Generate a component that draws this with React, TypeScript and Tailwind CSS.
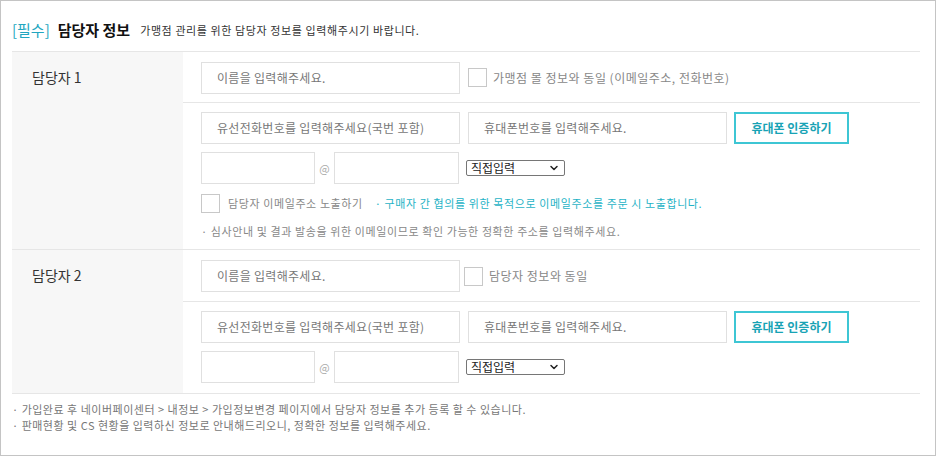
import { ChevronDown } from 'lucide-react'

const FONT = 'font-["Noto_Sans_CJK_KR","Noto_Sans",sans-serif]'

function TextInput({ placeholder = '', w }: { placeholder?: string; w: string }) {
  return (
    <div
      className={`${w} flex h-[32px] shrink-0 items-center border border-[#e0e0e0] bg-white pl-[15px] text-[12px] tracking-[0.3px] text-[#777]`}
    >
      {placeholder}
    </div>
  )
}

function Check() {
  return <span className="block h-[19px] w-[19px] shrink-0 border border-[#c8c8c8] bg-white" />
}

function SelectBox() {
  return (
    <div className="ml-[7px] flex h-[16px] w-[99px] items-center justify-between rounded-[2px] border border-[#767676] bg-white pl-[4px] pr-[4px] text-[12px] leading-none text-[#222]">
      <span>직접입력</span>
      <ChevronDown size={12} strokeWidth={3} className="text-[#222]" />
    </div>
  )
}

function PhoneEmail() {
  return (
    <>
      <div className="flex items-center">
        <TextInput w="w-[259px]" placeholder="유선전화번호를 입력해주세요(국번 포함)" />
        <div className="ml-[8px]">
          <TextInput w="w-[259px]" placeholder="휴대폰번호를 입력해주세요." />
        </div>
        <button
          type="button"
          className="ml-[7px] flex h-[32px] w-[115px] items-center justify-center border-2 border-[#3ec6d4] bg-white text-[12px] font-semibold text-[#18a3b5]"
        >
          휴대폰 인증하기
        </button>
      </div>
      <div className="mt-[8px] flex items-center">
        <TextInput w="w-[114px]" />
        <span className="w-[19px] text-center text-[11px] text-[#aaa]">@</span>
        <TextInput w="w-[125px]" />
        <SelectBox />
      </div>
    </>
  )
}

function Contact({
  label,
  sameLabel,
  checkGap,
  extra,
}: {
  label: string
  sameLabel: string
  checkGap: string
  extra?: boolean
}) {
  return (
    <div className="grid grid-cols-[171px_1fr]">
      <div className="bg-[#f7f7f7]">
        <div className="flex h-[51px] items-center pl-[20px] text-[14px] text-[#333]">{label}</div>
      </div>
      <div>
        <div
          className={`flex ${extra ? 'h-[51px]' : 'h-[52px]'} items-center border-b border-[#e6e6e6] pl-[18px] pt-[1px]`}
        >
          <TextInput w="w-[259px]" placeholder="이름을 입력해주세요." />
          <div className={`${checkGap} flex items-center gap-[6px] text-[12px] tracking-[0.5px] text-[#888]`}>
            <Check />
            <span>{sameLabel}</span>
          </div>
        </div>
        <div className={`pl-[18px] pt-[9px] ${extra ? 'pb-[0px]' : 'pb-[10px]'}`}>
          <PhoneEmail />
          {extra && (
            <>
              <div className="mt-[10px] flex items-center text-[11px] tracking-[0.6px]">
                <Check />
                <span className="ml-[8px] text-[#888]">담당자 이메일주소 노출하기</span>
                <span className="ml-[12px] text-[#1fb3c6]">· 구매자 간 협의를 위한 목적으로 이메일주소를 주문 시 노출합니다.</span>
              </div>
              <div className="flex h-[36px] items-center text-[11px] tracking-[0.6px] text-[#888]">
                · 심사안내 및 결과 발송을 위한 이메일이므로 확인 가능한 정확한 주소를 입력해주세요.
              </div>
            </>
          )}
        </div>
      </div>
    </div>
  )
}

export default function App() {
  return (
    <div className={`${FONT} h-[456px] w-[936px] border border-[#c4c4c4] bg-white pl-[11px] pr-[15px]`}>
      <div className="flex h-[50px] items-center pt-[8px]">
        <span className="text-[15px] text-[#22a6c0]">[필수]</span>
        <span className="ml-[8px] text-[15px] font-bold text-[#111]">담당자 정보</span>
        <span className="ml-[10px] text-[11px] tracking-[0.6px] text-[#333]">
          가맹점 관리를 위한 담당자 정보를 입력해주시기 바랍니다.
        </span>
      </div>
      <div className="border-y border-[#e6e6e6]">
        <div className="border-b border-[#e6e6e6]">
          <Contact
            label="담당자 1"
            sameLabel="가맹점 몰 정보와 동일 (이메일주소, 전화번호)"
            checkGap="ml-[8px]"
            extra
          />
        </div>
        <Contact label="담당자 2" sameLabel="담당자 정보와 동일" checkGap="ml-[4px]" />
      </div>
      <div className="pt-[7px] text-[11px] leading-[16px] tracking-[0.5px] text-[#777]">
        <p>· 가입완료 후 네이버페이센터 &gt; 내정보 &gt; 가입정보변경 페이지에서 담당자 정보를 추가 등록 할 수 있습니다.</p>
        <p>· 판매현황 및 CS 현황을 입력하신 정보로 안내해드리오니, 정확한 정보를 입력해주세요.</p>
      </div>
    </div>
  )
}
